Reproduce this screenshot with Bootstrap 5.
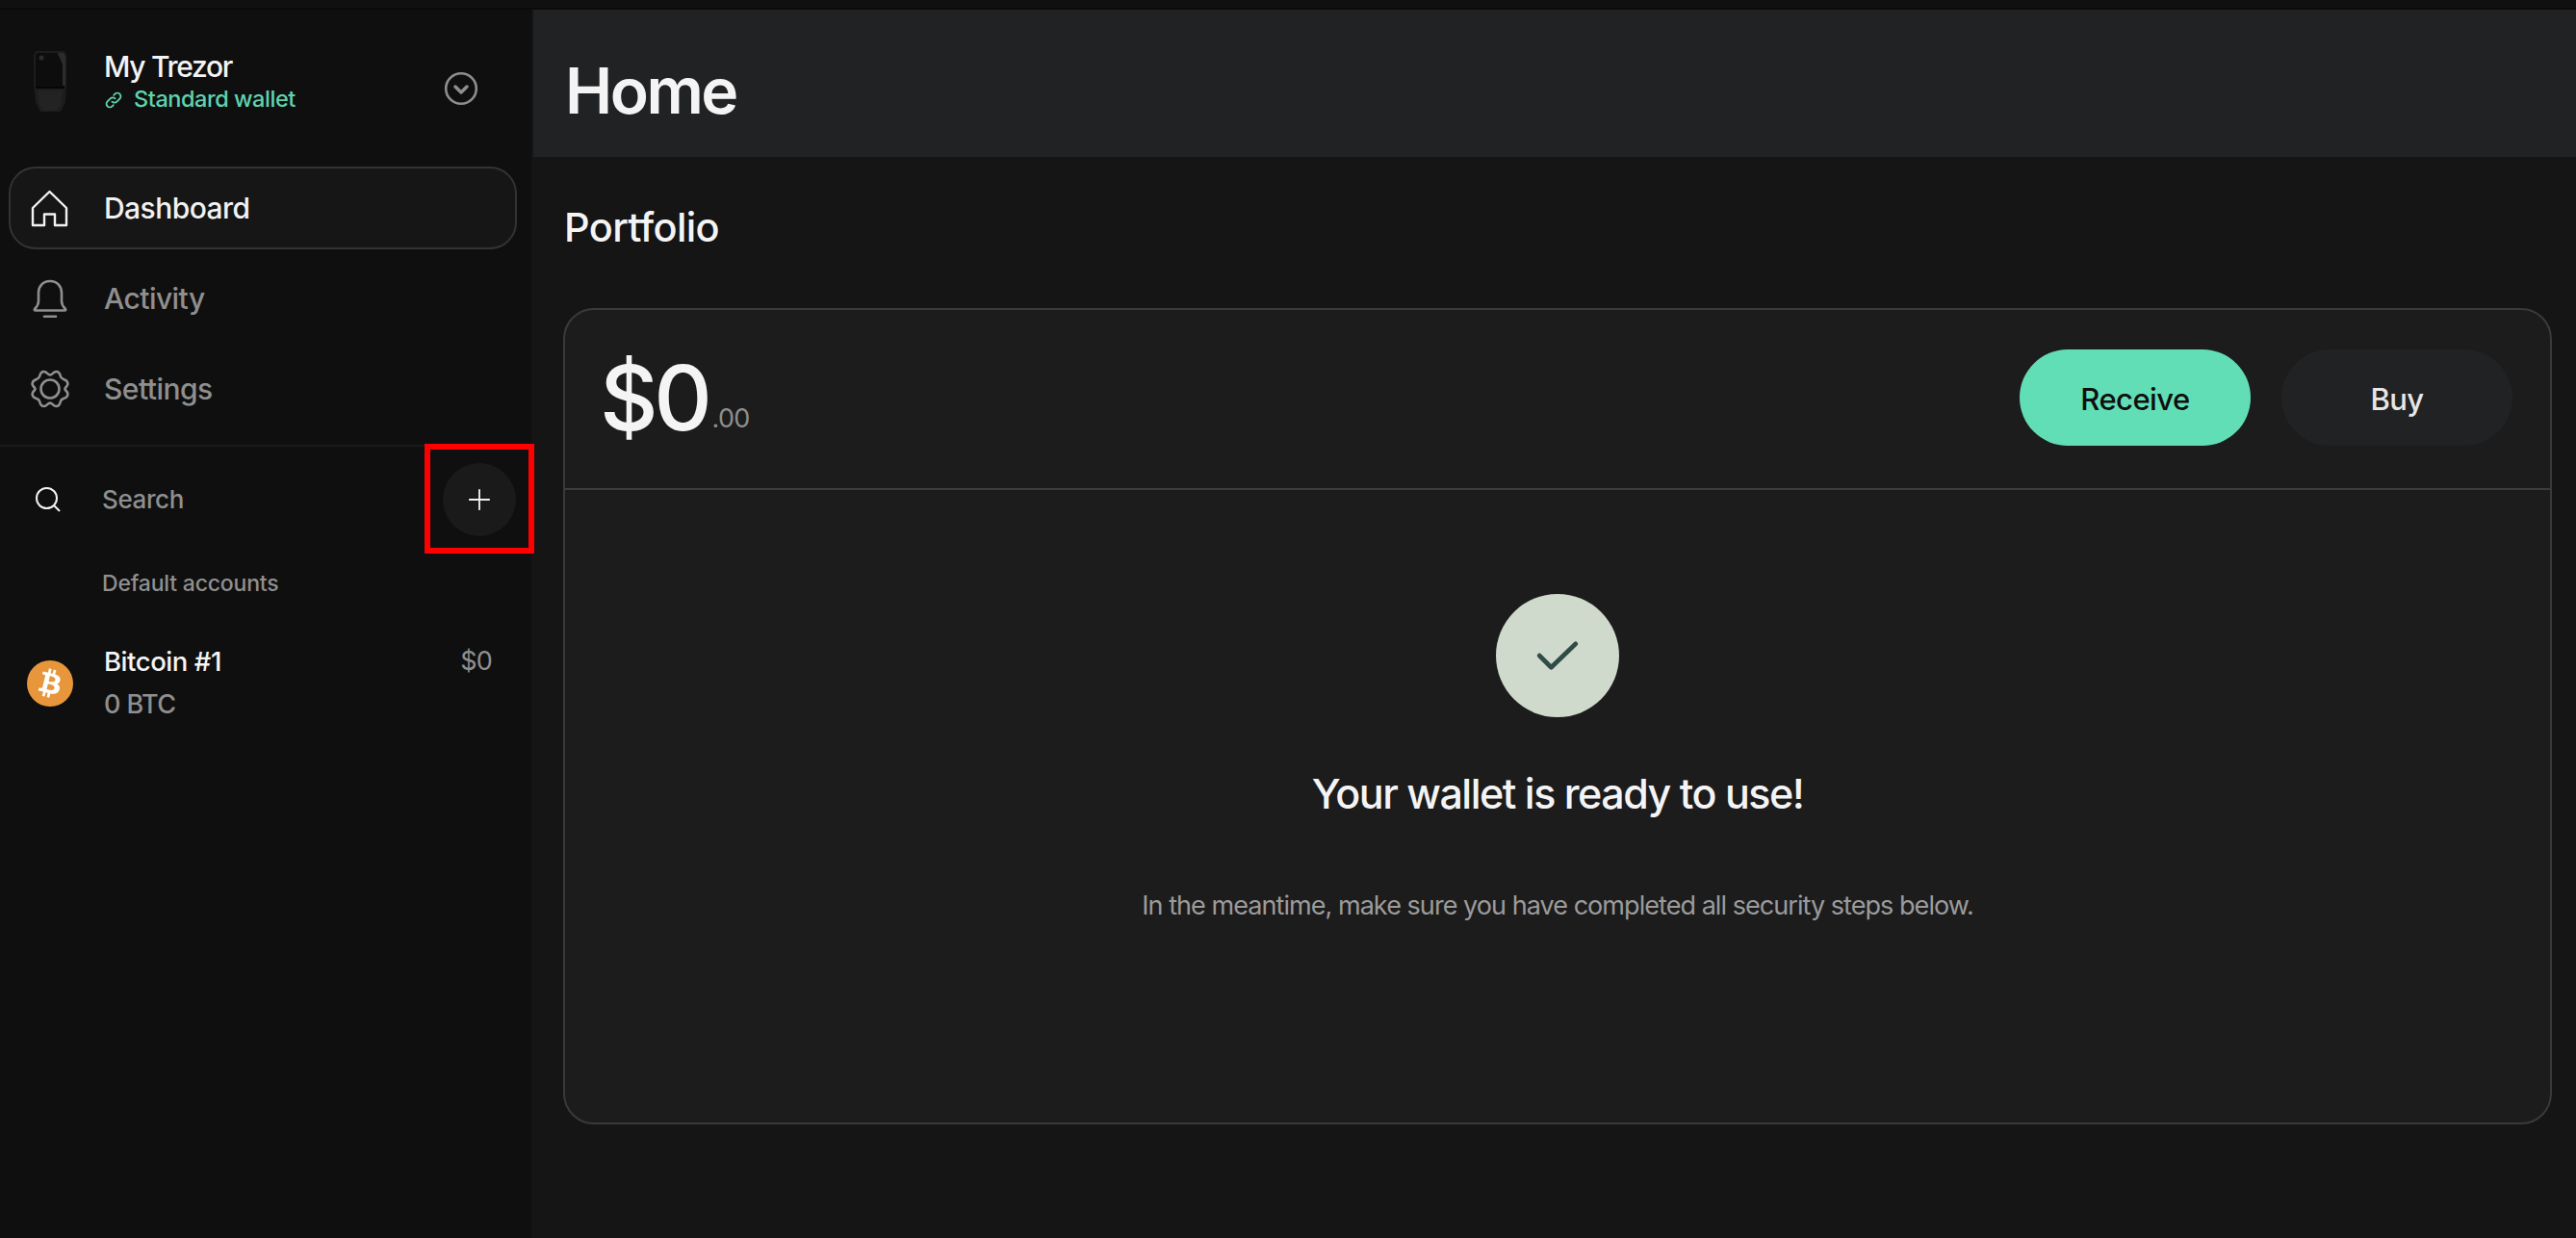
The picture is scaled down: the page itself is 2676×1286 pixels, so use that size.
<!DOCTYPE html>
<html lang="en">
<head>
<meta charset="utf-8">
<title>Trezor Suite</title>
<link href="https://cdn.jsdelivr.net/npm/bootstrap@5.3.0/dist/css/bootstrap.min.css" rel="stylesheet">
<style>
html,body{height:100%;}
body{background:#151515;color:#f4f4f5;font-family:Inter,"Liberation Sans",sans-serif;overflow:hidden;}
.top-strip{height:10px;background:#101010;border-bottom:2px solid #0b0b0b;}
.shell{height:1276px;}
.side{width:554px;flex:none;background:#0f0f0f;border-right:2px solid #151515;}
.dev-head{height:163px;padding:43px 0 0 34px;}
.dev-img{width:36px;height:64px;flex:none;display:block;}
.dev-text{margin-left:38px;width:320px;}
.dev-name{font-size:30px;line-height:36px;font-weight:500;letter-spacing:-1.3px;margin-top:-2px;}
.dev-sub{font-size:23.5px;line-height:30px;color:#5fd3ad;letter-spacing:-.45px;font-weight:500;margin-top:1px;}
.dev-sub svg{width:20px;height:20px;margin-right:11px;vertical-align:-3px;}
.chev{width:36px;height:36px;flex:none;margin-top:21px;margin-left:33px;}
.nav-row{height:86px;margin:0 15px 0 9px;padding-left:21px;border:2px solid transparent;border-radius:28px;font-size:30px;font-weight:500;letter-spacing:-.55px;color:#8f8f8f;}
.nav-row.active-row{background:#161616;border-color:#333;color:#f2f2f2;}
.nav-gap{margin-top:8px;}
.nav-ico{width:40px;height:40px;flex:none;margin-right:36px;}
.side-rule{border-top:2px solid #1a1a1a;margin-top:15px;}
.search-row{padding:16px 16px 0 37px;height:93px;}
.search-ico{width:26px;height:26px;flex:none;}
.search-txt{font-size:26px;color:#8f8f8f;margin-left:43px;letter-spacing:-.4px;font-weight:500;}
.plus-btn{width:76px;height:76px;background:#1a1a1a;border-radius:50%;flex:none;}
.plus-btn svg{width:24px;height:24px;}
.red-box{position:absolute;left:441px;top:451px;width:114px;height:114px;border:6px solid #fe0000;pointer-events:none;}
.group-lbl{font-size:23px;line-height:30px;color:#8f8f8f;padding:34px 0 0 106px;font-weight:500;letter-spacing:-.2px;}
.acct{padding:49px 42px 0 28px;}
.coin{width:48px;height:48px;flex:none;margin-top:16px;}
.acct-body{margin-left:32px;}
.acct-name{font-size:27.5px;line-height:34px;font-weight:500;letter-spacing:-.45px;}
.acct-bal{font-size:27px;line-height:34px;color:#8f8f8f;margin-top:11px;letter-spacing:-.6px;font-weight:500;}
.acct-fiat{font-size:27px;line-height:34px;color:#8f8f8f;letter-spacing:-.8px;margin-right:-1px;}
.page-head{height:153px;background:#212224;padding:14px 0 0 33px;}
.page-title{font-size:66px;font-weight:600;letter-spacing:-2.5px;margin:0;line-height:1;color:#f4f4f5;}
.sect-title{font-size:41.5px;line-height:48px;font-weight:500;letter-spacing:-.65px;margin:49px 0 0 32px;color:#f4f4f5;}
.port-card{margin:60px 25px 0 31px;height:848px;background:#1c1c1c;border:2px solid #3a3a3a;border-radius:32px;}
.port-head{height:187px;padding:0 39px 3px 36px;border-bottom:2px solid #3d3d3d;}
.big-val{font-size:94px;font-weight:500;letter-spacing:-4.5px;line-height:1;color:#f4f4f5;}
.big-cent{font-size:27px;font-weight:400;color:#8e8e8e;letter-spacing:-.6px;margin-left:4px;vertical-align:3px;}
.act-btn{width:240px;height:100px;border-radius:50px;border:0;font-size:31px;font-weight:500;letter-spacing:-.55px;padding-top:10px;}
.act-recv{background:#62deb6;color:#0f0f0f;}
.act-buy{background:#212224;color:#e6e6e6;margin-left:32px;}
.ok-wrap{padding-top:108px;}
.ok-circle{width:128px;height:128px;background:#cfd9cc;border-radius:50%;}
.ok-circle svg{width:46px;height:32px;}
.ok-title{font-size:43px;line-height:54px;font-weight:500;letter-spacing:-1.5px;margin:52px 0 0;color:#f4f4f5;}
.ok-sub{font-size:27px;line-height:36px;color:#9b9b9b;letter-spacing:-.95px;margin:72px 0 0;font-weight:400;}
</style>
</head>
<body>
<div class="top-strip"></div>
<div class="shell d-flex">
  <aside class="side position-relative">
    <div class="dev-head d-flex align-items-start">
      <svg class="dev-img" viewBox="0 0 36 64">
        <path d="M3 0h30l2 4v32l-1 17-5 10H8L3 53 1 36V4z" fill="#1d1d1d"/>
        <path d="M5 2h20l8 14v22H3V4z" fill="#0d0d0d"/>
        <path d="M26 2h6l2 4v30h-3V14z" fill="#2c2c2c"/>
        <rect x="3" y="37" width="30" height="2" fill="#060606"/>
        <circle cx="9" cy="7" r="2.500" fill="#2c2c2c"/>
        <path d="M5 41h26l-2 16-4 5H11l-4-5z" fill="#232323"/>
      </svg>
      <div class="dev-text">
        <div class="dev-name">My Trezor</div>
        <div class="dev-sub"><svg viewBox="0 0 20 20" fill="none" stroke="#5fd3ad" stroke-width="1.800" stroke-linecap="round"><path d="M8.400 11.600a3.400 3.400 0 0 0 5 0l3-3a3.500 3.500 0 0 0-5-5l-1.200 1.200"/><path d="M11.600 8.400a3.400 3.400 0 0 0-5 0l-3 3a3.500 3.500 0 0 0 5 5l1.200-1.200"/></svg>Standard wallet</div>
      </div>
      <svg class="chev" viewBox="0 0 36 36" fill="none" stroke="#8e8e8e" stroke-width="2.600" stroke-linecap="round" stroke-linejoin="round"><circle cx="18" cy="18" r="15.800"/><path d="M12 16l6 6 6-6" stroke-width="3.500"/></svg>
    </div>
    <div class="nav-row active-row d-flex align-items-center">
      <svg class="nav-ico" viewBox="0 0 40 40" fill="none" stroke="#f2f2f2" stroke-width="2.400" stroke-linejoin="round"><path d="M2 20L19.500 3 37 20v18H25V26.500H14V38H2z"/></svg>
      <span>Dashboard</span>
    </div>
    <div class="nav-row nav-gap d-flex align-items-center">
      <svg class="nav-ico" viewBox="0 0 40 40" fill="none" stroke="#8f8f8f" stroke-width="2.600" stroke-linecap="round" stroke-linejoin="round"><path d="M20 2c-7.500 0-12 5.500-12 12v9c0 3-1.500 5.500-4 8-.6.7-.2 1.500.8 1.500h30.400c1 0 1.400-.8.800-1.500-2.500-2.500-4-5-4-8v-9C32 7.500 27.500 2 20 2z"/><path d="M14 38.800h12"/></svg>
      <span>Activity</span>
    </div>
    <div class="nav-row nav-gap d-flex align-items-center">
      <svg class="nav-ico" viewBox="0 0 40 40" fill="none" stroke="#8f8f8f" stroke-width="2.600" stroke-linejoin="round"><path d="M20 5.400c2.400 0 3.300-3.400 6.400-3.400 2.900 0 3.900 2.500 4.400 4.800.4 1.800 1.500 2.500 3.200 3.100 2.600.9 4.800 2.600 4.300 5.500-.4 2.200-2.800 3-2.800 4.600s2.400 2.400 2.800 4.600c.5 2.900-1.700 4.600-4.300 5.500-1.700.6-2.800 1.300-3.200 3.100-.5 2.300-1.500 4.800-4.400 4.800-3.100 0-4-3.400-6.400-3.400s-3.300 3.400-6.400 3.400c-2.900 0-3.900-2.500-4.400-4.800-.4-1.800-1.500-2.500-3.200-3.100-2.600-.9-4.800-2.600-4.300-5.500.4-2.200 2.800-3 2.800-4.600s-2.400-2.400-2.800-4.600c-.5-2.900 1.700-4.600 4.300-5.500 1.700-.6 2.800-1.300 3.200-3.100C9.700 4.500 10.700 2 13.600 2c3.100 0 4 3.400 6.400 3.400z"/><circle cx="20" cy="20" r="9.500"/></svg>
      <span>Settings</span>
    </div>
    <div class="side-rule"></div>
    <div class="search-row d-flex align-items-center">
      <svg class="search-ico" viewBox="0 0 26 26" fill="none" stroke="#f2f2f2" stroke-width="2"><circle cx="11.500" cy="11.500" r="10.500"/><path d="M19 19l6 6"/></svg>
      <span class="search-txt flex-grow-1">Search</span>
      <span class="plus-btn d-flex align-items-center justify-content-center">
        <svg viewBox="0 0 26 26" stroke="#f0f0f0" stroke-width="2" stroke-linecap="round"><path d="M13 2v22M2 13h22"/></svg>
      </span>
    </div>
    <div class="group-lbl">Default accounts</div>
    <div class="acct d-flex align-items-start">
      <svg class="coin" viewBox="0 0 24 24"><circle cx="12" cy="12" r="12" fill="#e8963c"/><path fill="#fff" fill-rule="evenodd" d="M17.288 10.291c.24-1.59-.974-2.45-2.64-3.03l.54-2.153-1.315-.33-.525 2.107c-.345-.087-.705-.167-1.064-.25l.526-2.127-1.32-.33-.54 2.165c-.285-.067-.565-.132-.84-.2l-1.815-.45-.35 1.407s.975.225.955.236c.535.136.63.486.615.766l-1.477 5.92c-.075.166-.24.406-.614.314.015.02-.96-.24-.96-.24l-.66 1.51 1.71.426.93.242-.54 2.19 1.32.327.54-2.17c.36.1.705.19 1.05.273l-.51 2.154 1.32.33.545-2.19c2.24.427 3.93.257 4.64-1.774.57-1.637-.03-2.58-1.217-3.196.854-.193 1.5-.76 1.68-1.93h.01zm-3.01 4.22c-.404 1.64-3.157.75-4.05.53l.72-2.9c.896.23 3.757.67 3.33 2.37zm.41-4.24c-.37 1.49-2.662.735-3.405.55l.654-2.64c.744.18 3.137.524 2.75 2.084v.006z"/></svg>
      <div class="acct-body flex-grow-1">
        <div class="acct-name">Bitcoin #1</div>
        <div class="acct-bal">0 BTC</div>
      </div>
      <div class="acct-fiat">$0</div>
    </div>
    <div class="red-box"></div>
  </aside>
  <main class="flex-grow-1">
    <header class="page-head d-flex align-items-center"><h1 class="page-title">Home</h1></header>
    <h2 class="sect-title">Portfolio</h2>
    <section class="port-card">
      <div class="port-head d-flex align-items-center justify-content-between">
        <div class="big-val">$0<span class="big-cent">.00</span></div>
        <div class="d-flex">
          <button class="btn act-btn act-recv">Receive</button>
          <button class="btn act-btn act-buy">Buy</button>
        </div>
      </div>
      <div class="ok-wrap d-flex flex-column align-items-center">
        <div class="ok-circle d-flex align-items-center justify-content-center">
          <svg viewBox="0 0 48 34" fill="none" stroke="#2f4d47" stroke-width="5" stroke-linecap="round" stroke-linejoin="round"><path d="M4 17l13 13L44 4"/></svg>
        </div>
        <p class="ok-title">Your wallet is ready to use!</p>
        <p class="ok-sub">In the meantime, make sure you have completed all security steps below.</p>
      </div>
    </section>
  </main>
</div>
</body>
</html>
